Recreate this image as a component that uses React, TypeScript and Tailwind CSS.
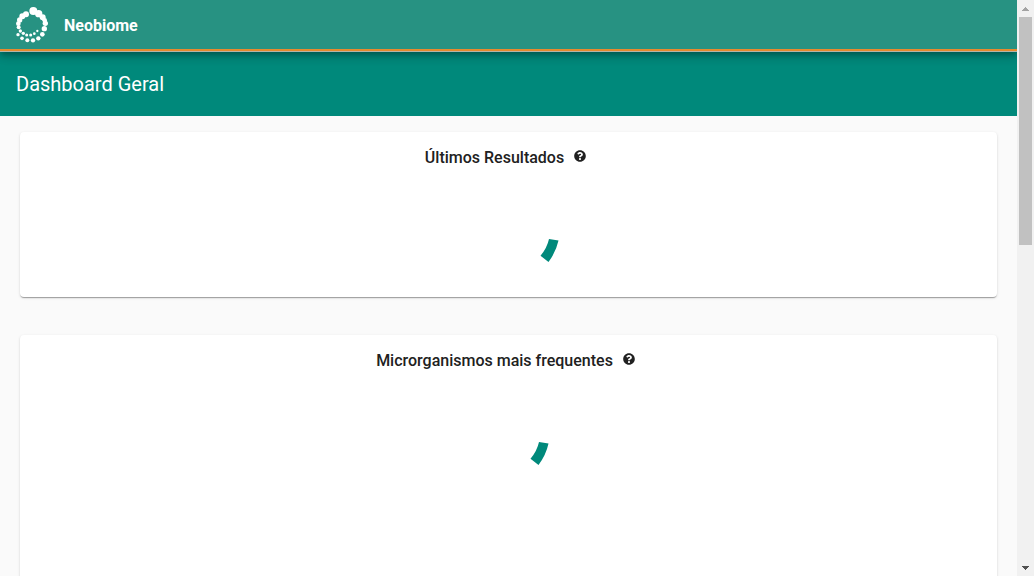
import React from "react";
import { FaQuestionCircle } from "react-icons/fa";

const LOGO_DOTS: [number, number, number][] = [
  [70, 27, 12], [86, 35, 11], [98, 46, 9], [104, 55, 7], [106, 64, 8], [103, 80, 8],
  [97, 97, 7], [85, 109, 6.5], [69, 115, 6.5], [52, 115, 6], [36, 109, 5.5], [24, 98, 5],
  [48, 37, 9], [37, 43, 9], [29, 54, 8], [25, 65, 7], [26, 76, 6], [31, 87, 5],
  [40, 94, 5], [50, 99, 4.5], [62, 99, 4.5], [73, 95, 4], [82, 87, 3.5],
];

function Logo() {
  return (
    <svg viewBox="15 12 99 114" className="h-[38px] w-[33px]" fill="#fff" aria-hidden="true">
      {LOGO_DOTS.map(([cx, cy, r]) => (
        <circle key={`${cx}-${cy}`} cx={cx} cy={cy} r={r} />
      ))}
    </svg>
  );
}

function Spinner() {
  return (
    <svg viewBox="0 0 100 100" className="size-[100px]" role="status">
      <path d="M90 59 L99.5 60.5 Q97 72 89.5 82 L81.5 75.8 Q88 68 90 59 Z" fill="#00897b" />
    </svg>
  );
}

function Card({ title, className, children }: { title: string; className: string; children: React.ReactNode }) {
  return (
    <section
      className={`rounded bg-white pt-4 shadow-[0_2px_1px_-1px_rgba(0,0,0,0.2),0_1px_1px_0_rgba(0,0,0,0.14),0_1px_3px_0_rgba(0,0,0,0.12)] ${className}`}
    >
      <div className="flex h-5 items-center justify-center gap-2.5 pr-1.5">
        <h2 className="text-base leading-5 font-medium text-[#212121]">{title}</h2>
        <button type="button" aria-label={`Ajuda: ${title}`} className="pb-1 text-[#212121]">
          <FaQuestionCircle size={12} />
        </button>
      </div>
      <div className="flex justify-center pt-3">{children}</div>
    </section>
  );
}

function ScrollTrack() {
  return (
    <div className="flex w-[17px] shrink-0 flex-col items-center bg-[#f1f1f1]" aria-hidden="true">
      <div className="flex h-[17px] items-center">
        <svg viewBox="0 0 7 4" className="h-1 w-[7px]" fill="#a3a3a3" shapeRendering="crispEdges">
          <path d="M3 0h1v1h1v1h1v1h1v1H0V3h1V2h1V1h1z" />
        </svg>
      </div>
      <div className="h-[228px] w-[13px] bg-[#c1c1c1]" />
      <div className="mt-auto flex h-[17px] items-center">
        <svg viewBox="0 0 7 4" className="h-1 w-[7px]" fill="#505050" shapeRendering="crispEdges">
          <path d="M0 0h7v1H6v1H5v1H4v1H3V3H2V2H1V1H0z" />
        </svg>
      </div>
    </div>
  );
}

export default function App() {
  return (
    <div className="flex h-screen overflow-hidden bg-[#fafafa] font-[Roboto,sans-serif]">
      <div className="flex min-w-0 flex-1 flex-col overflow-hidden">
        <header className="z-10 shrink-0 border-b border-[#b5b5a8] shadow-[0_3px_5px_-1px_rgba(0,0,0,0.2),0_5px_8px_0_rgba(0,0,0,0.14),0_1px_14px_0_rgba(0,0,0,0.12)]">
          <div className="flex h-[51px] items-center gap-4 border-b-2 border-[#e68a2e] bg-[#279282] pl-[15px]">
            <Logo />
            <a href="#" className="pt-0.5 text-base font-bold text-white">Neobiome</a>
          </div>
        </header>
        <div className="flex h-16 shrink-0 items-center bg-[#00897b] px-4">
          <h1 className="text-xl text-white">Dashboard Geral</h1>
        </div>
        <main className="flex flex-col gap-[38px] px-5 pt-4">
          <Card title="Últimos Resultados" className="h-[165px] shrink-0">
            <Spinner />
          </Card>
          <Card title="Microrganismos mais frequentes" className="h-[400px] shrink-0">
            <div className="pr-5">
              <Spinner />
            </div>
          </Card>
        </main>
      </div>
      <ScrollTrack />
    </div>
  );
}
